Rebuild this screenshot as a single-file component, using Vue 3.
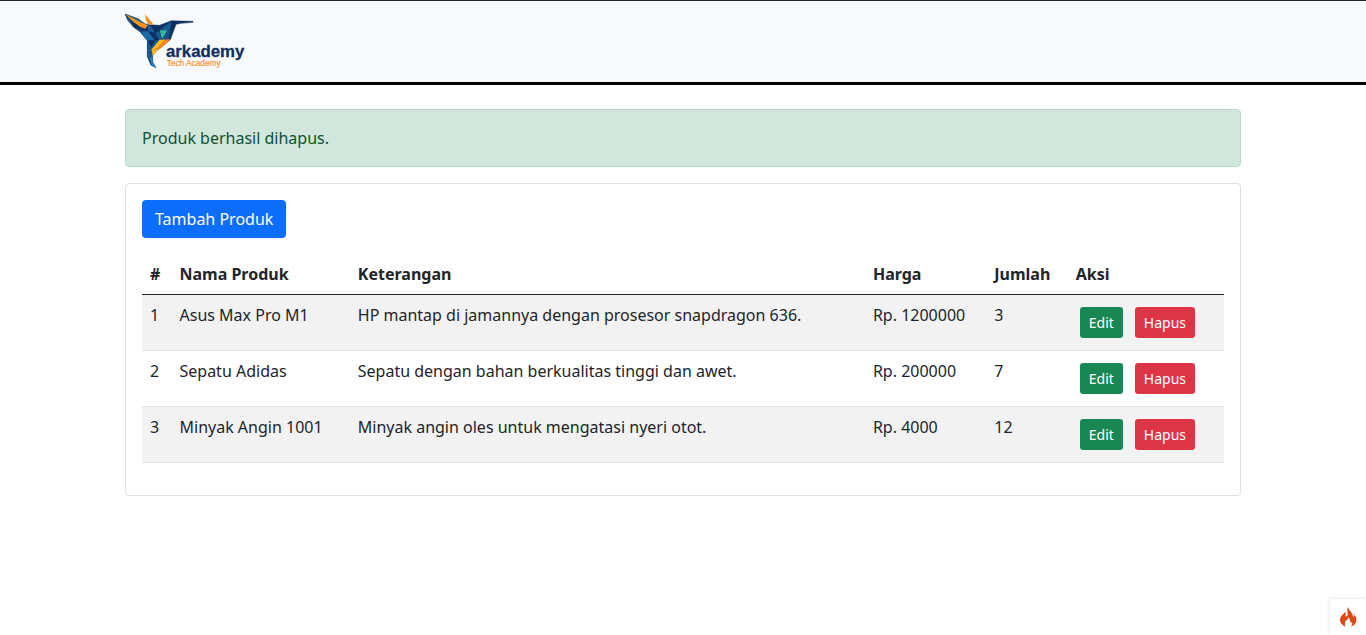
<script setup>
const products = [
  { name: 'Asus Max Pro M1', description: 'HP mantap di jamannya dengan prosesor snapdragon 636.', price: 1200000, qty: 3 },
  { name: 'Sepatu Adidas', description: 'Sepatu dengan bahan berkualitas tinggi dan awet.', price: 200000, qty: 7 },
  { name: 'Minyak Angin 1001', description: 'Minyak angin oles untuk mengatasi nyeri otot.', price: 4000, qty: 12 },
]
</script>

<template>
  <div class="page">
    <nav class="navbar">
      <div class="container">
        <a class="brand">
          <svg width="130" height="62" viewBox="15 36 390 186" aria-label="arkademy Tech Academy">
            <!-- body silhouette, facets are laid over it -->
            <path d="M15 42 54 56 74 71 88 74 119 76 154 62 180 63 219 64 219 67 183 70 168 73 151 119 112 150 98 165 98 186 108 203 93 196 82 170 82 122 60 95 40 81 23 60Z" fill="#0c3162" stroke="#0c3162" stroke-width="1.5" stroke-linejoin="round" />
            <path d="M15 42 54 56 74 71 60 69Z" fill="#2a6577" />
            <path d="M15 42 60 66 84 76 76 86 60 80 40 66Z" fill="#f7941d" />
            <path d="M15 42 42 70 64 86 62 95 44 82 23 60Z" fill="#12518a" />
            <path d="M30 60 56 79 66 91 46 83Z" fill="#0a2d5e" />
            <path d="M75 43 102 75 85 73 78 62Z" fill="#f7941d" />
            <path d="M62 94 84 94 103 120 82 122Z" fill="#1c68a6" />
            <path d="M84 76 92 77 105 98 84 94Z" fill="#1b5e9b" />
            <path d="M120 89 154 64 151 88 140 92Z" fill="#165b96" />
            <path d="M154 64 173 66 152 88Z" fill="#0c315f" />
            <path d="M119 91 143 91 126 118Z" fill="#36b59f" />
            <path d="M143 91 152 91 145 119 127 119Z" fill="#155181" />
            <path d="M106 99 118 93 126 119 118 120Z" fill="#1b5a91" />
            <path d="M82 122 119 120 113 134 94 151 82 139Z" fill="#15548f" />
            <path d="M84 122 106 121 94 141Z" fill="#092e62" />
            <path d="M119 119 152 118 121 146 93 151Z" fill="#f58220" />
            <path d="M119 120 133 119 112 143 93 151Z" fill="#ffbe17" />
            <path d="M82 139 95 150 99 168 89 184 82 164Z" fill="#145b97" />
            <path d="M95 149 115 147 98 168Z" fill="#ffb51b" />
            <path d="M90 178 98 165 98 187 108 203 95 196Z" fill="#2187c8" />
            <text x="138" y="170" class="wordmark" textLength="235" lengthAdjust="spacingAndGlyphs">arkademy</text>
            <text x="140" y="197" class="tagline" textLength="162" lengthAdjust="spacingAndGlyphs">Tech Academy</text>
          </svg>
        </a>
      </div>
    </nav>

    <main class="container">
      <div class="alert">Produk berhasil dihapus.</div>
      <section class="card">
        <button class="btn primary">Tambah Produk</button>
        <table>
          <colgroup>
            <col class="c-no" /><col class="c-name" /><col class="c-desc" />
            <col class="c-price" /><col class="c-qty" /><col />
          </colgroup>
          <thead>
            <tr><th>#</th><th>Nama Produk</th><th>Keterangan</th><th>Harga</th><th>Jumlah</th><th>Aksi</th></tr>
          </thead>
          <tbody>
            <tr v-for="(p, i) in products" :key="p.name">
              <td>{{ i + 1 }}</td>
              <td>{{ p.name }}</td>
              <td>{{ p.description }}</td>
              <td>Rp. {{ p.price }}</td>
              <td>{{ p.qty }}</td>
              <td>
                <div class="actions">
                  <button class="btn small success">Edit</button>
                  <button class="btn small danger">Hapus</button>
                </div>
              </td>
            </tr>
          </tbody>
        </table>
      </section>
    </main>

    <div class="debug-icon">
      <svg width="17" height="20" viewBox="0 0 51 60">
        <path d="M18 59C6 55 0 47 0 38C0 27 9 23 16 14C18 20 16 24 17 28C20 30 23 26 23 21C23 13 20 8 24 0C26 10 34 14 37 21C39 25 38 28 40 30C42 28 42 25 41 22C47 27 50 34 49 41C48 50 42 56 33 59C37 55 38 50 36 46C35 48 32 48 31 45C30 41 31 36 25 31C26 38 16 40 15 47C14 52 15 56 18 59Z" fill="#dd4814" />
      </svg>
    </div>
  </div>
</template>

<style>
body { background: #fff; }
</style>

<style scoped>
* { box-sizing: border-box; }
.page {
  height: 635px;
  overflow: hidden;
  position: relative;
  font: 16px/24px "Noto Sans", sans-serif;
  color: #212529;
}
.container { width: 1116px; margin: 0 auto; }
.navbar {
  height: 85px;
  padding-top: 11px;
  background: #f8f9fa;
  border-top: 1px solid #212529;
  border-bottom: 3px solid #000;
}
.brand, .brand svg { display: block; }
.brand svg { overflow: visible; }
.wordmark { font: bold 51px "Liberation Sans", sans-serif; fill: #102d60; stroke: #102d60; stroke-width: .8px; }
.tagline { font: 25px "Liberation Sans", sans-serif; fill: #f7942e; stroke: #f7942e; stroke-width: .6px; }
.alert {
  margin: 24px 0 16px;
  padding: 16px;
  color: #0f5132;
  background: #d1e7dd;
  border: 1px solid #badbcc;
  border-radius: 4px;
}
.card {
  height: 313px;
  padding: 16px;
  border: 1px solid rgba(0, 0, 0, .125);
  border-radius: 4px;
}
.btn {
  display: block;
  margin: 0;
  border: 1px solid transparent;
  color: #fff;
  font: 16px/24px "Noto Sans", sans-serif;
  padding: 6px 12px;
  border-radius: 4px;
}
.primary { background: #0d6efd; }
.small { font-size: 14px; line-height: 21px; padding: 4px 8px; border-radius: 3.2px; }
.success { background: #198754; }
.danger { background: #dc3545; }
table {
  width: 1082px;
  margin-top: 16px;
  table-layout: fixed;
  border-collapse: separate;
  border-spacing: 0;
}
.c-no { width: 29.5px; }
.c-name { width: 178.3px; }
.c-desc { width: 515.1px; }
.c-price { width: 121.4px; }
.c-qty { width: 81.5px; }
th, td { padding: 8px; text-align: left; vertical-align: top; white-space: nowrap; }
th { height: 41px; font-weight: 700; border-bottom: 1px solid #212529; }
td { height: 56px; border-bottom: 1px solid #dee2e6; }
tbody tr:nth-child(odd) { background: #f2f2f2; }
.actions { display: flex; gap: 12px; padding: 4px; }
.debug-icon {
  position: absolute;
  right: 0;
  bottom: 0;
  width: 36px;
  height: 36px;
  display: flex;
  padding: 8px 0 0 10px;
  background: #fff;
  box-shadow: 0 0 4px #ddd;
}
</style>
